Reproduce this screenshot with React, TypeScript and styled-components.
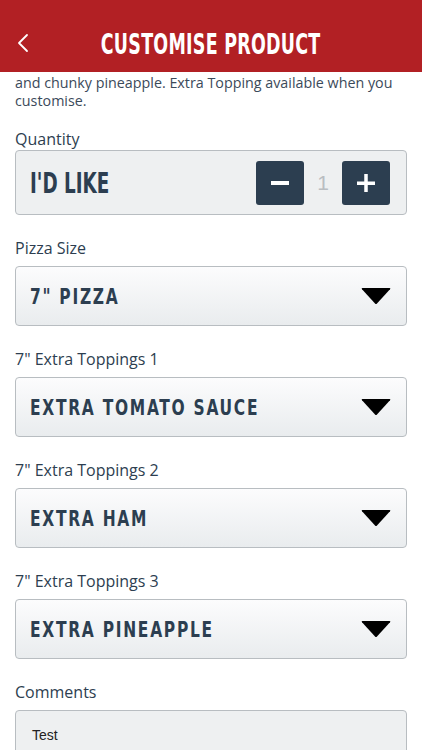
import React from 'react'
import styled, { createGlobalStyle } from 'styled-components'

const GlobalStyle = createGlobalStyle`
  html, body {
    margin: 0;
    padding: 0;
    background: #ffffff;
  }
  body {
    font-family: 'Open Sans', 'Noto Sans', sans-serif;
    overflow: hidden;
  }
`

const CONDENSED = `'Liberation Sans Narrow', 'DejaVu Sans Condensed', 'Liberation Sans', sans-serif`

const Screen = styled.div`
  width: 422px;
  height: 750px;
  overflow: hidden;
  display: flex;
  flex-direction: column;
`

const Header = styled.header`
  height: 72px;
  box-sizing: border-box;
  padding-top: 16px;
  background: #b22024;
  display: flex;
  align-items: center;
  justify-content: center;
  position: relative;
  flex-shrink: 0;
`

const BackButton = styled.button`
  position: absolute;
  left: 12px;
  top: 30px;
  width: 22px;
  height: 26px;
  padding: 0;
  border: 0;
  background: transparent;
  display: flex;
  align-items: center;
  justify-content: center;
`

const Title = styled.h1`
  margin: 0;
  color: #ffffff;
  font-family: ${CONDENSED};
  font-weight: 700;
  font-size: 24px;
  letter-spacing: 0.3px;
  white-space: nowrap;
  transform: scale(0.81, 1.2);
`

const Content = styled.main`
  padding: 3px 15px 0;
  display: flex;
  flex-direction: column;
`

const Description = styled.p`
  margin: -1px 0 18px;
  font-size: 14.3px;
  line-height: 18px;
  color: #3b4a5a;
  white-space: nowrap;
`

const Field = styled.section`
  display: flex;
  flex-direction: column;
  margin-bottom: 22px;
`

const Label = styled.div<{ $gap: number }>`
  font-size: 16px;
  line-height: 22px;
  color: #2d3e50;
  margin-bottom: ${(p) => p.$gap}px;
`

const QuantityBox = styled.div`
  height: 65px;
  box-sizing: border-box;
  border: 1px solid #b8bdc1;
  border-radius: 4px;
  background: #eef0f1;
  display: flex;
  align-items: center;
  padding: 0 16px 0 14px;
`

const BigText = styled.span`
  font-family: ${CONDENSED};
  font-weight: 700;
  font-size: 24px;
  color: #2c3e50;
  display: inline-block;
  white-space: nowrap;
  transform: scale(0.85, 1.2);
  transform-origin: left center;
  flex: 1;
`

const StepButton = styled.button`
  width: 48px;
  height: 44px;
  border: 0;
  border-radius: 3px;
  background: #2c3e50;
  padding: 0;
  display: flex;
  align-items: center;
  justify-content: center;
`

const Count = styled.span`
  font-family: 'Liberation Sans', Arial, sans-serif;
  font-size: 21px;
  color: #b9bdc1;
  width: 38px;
  text-align: center;
`

const SelectBox = styled.div`
  height: 60px;
  box-sizing: border-box;
  border: 1px solid #b8bdc1;
  border-radius: 4px;
  background: linear-gradient(#fcfcfd, #e9ecee);
  display: flex;
  align-items: center;
  justify-content: space-between;
  padding: 0 15px 0 14px;
`

const SelectText = styled.span`
  font-family: ${CONDENSED};
  font-weight: 700;
  font-size: 20px;
  letter-spacing: 2px;
  color: #2c3e50;
  display: inline-block;
  white-space: nowrap;
  transform: scale(0.86, 1.1);
  transform-origin: left center;
`

const CommentBox = styled.div`
  height: 80px;
  box-sizing: border-box;
  border: 1px solid #b8bdc1;
  border-radius: 4px;
  background: #eef0f1;
  padding: 15px 16px 0;
  font-family: 'Liberation Sans', Arial, sans-serif;
  font-size: 14px;
  line-height: 18px;
  color: #222222;
`

const Chevron = () => (
  <svg width="12" height="20" viewBox="0 0 12 20">
    <polyline points="10,2 2,10 10,18" fill="none" stroke="#ffffff" strokeWidth="1.8" strokeLinecap="round" strokeLinejoin="round" />
  </svg>
)

const Caret = () => (
  <svg width="30" height="18" viewBox="0 0 30 18">
    <path d="M1.5 1 L28.5 1 Q30 1 29 2.3 L16 16.5 Q15 17.5 14 16.5 L1 2.3 Q0 1 1.5 1 Z" fill="#000000" />
  </svg>
)

const Minus = () => (
  <svg width="18" height="18" viewBox="0 0 18 18">
    <rect x="0" y="7" width="18" height="4" fill="#ffffff" />
  </svg>
)

const Plus = () => (
  <svg width="18" height="18" viewBox="0 0 18 18">
    <rect x="0" y="7.5" width="18" height="3.5" fill="#ffffff" />
    <rect x="7.25" y="0" width="3.5" height="18" fill="#ffffff" />
  </svg>
)

const selects = [
  { label: 'Pizza Size', value: '7" PIZZA' },
  { label: '7" Extra Toppings 1', value: 'EXTRA TOMATO SAUCE' },
  { label: '7" Extra Toppings 2', value: 'EXTRA HAM' },
  { label: '7" Extra Toppings 3', value: 'EXTRA PINEAPPLE' },
]

export default function App() {
  return (
    <Screen>
      <GlobalStyle />
      <Header>
        <BackButton aria-label="Back">
          <Chevron />
        </BackButton>
        <Title>CUSTOMISE PRODUCT</Title>
      </Header>
      <Content>
        <Description>
          and chunky pineapple. Extra Topping available when you
          <br />
          customise.
        </Description>
        <Field>
          <Label $gap={0}>Quantity</Label>
          <QuantityBox>
            <BigText>I'D LIKE</BigText>
            <StepButton aria-label="Decrease">
              <Minus />
            </StepButton>
            <Count>1</Count>
            <StepButton aria-label="Increase">
              <Plus />
            </StepButton>
          </QuantityBox>
        </Field>
        {selects.map((s) => (
          <Field key={s.label}>
            <Label $gap={7}>{s.label}</Label>
            <SelectBox>
              <SelectText>{s.value}</SelectText>
              <Caret />
            </SelectBox>
          </Field>
        ))}
        <Field>
          <Label $gap={7}>Comments</Label>
          <CommentBox>Test</CommentBox>
        </Field>
      </Content>
    </Screen>
  )
}
